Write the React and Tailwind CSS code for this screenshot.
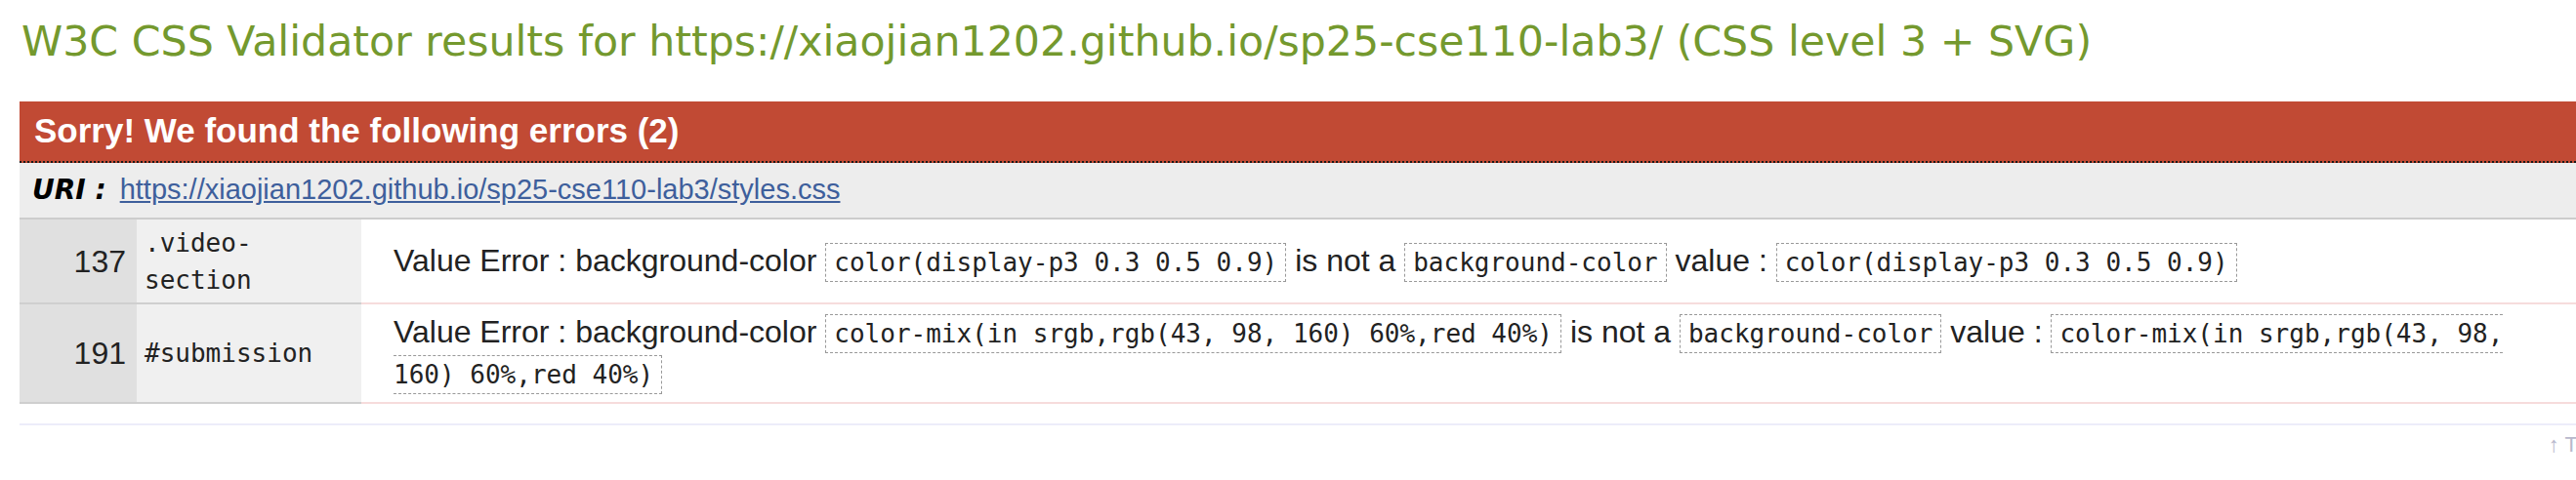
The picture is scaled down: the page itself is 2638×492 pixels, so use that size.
export default function App() {
  const code =
    "font-['DejaVu_Sans_Mono',monospace] text-[26px] border border-dashed border-[#999999] px-[8px] py-[4px] text-[#222222]";
  return (
    <div className="w-[2638px] h-[492px] overflow-hidden bg-white font-['Liberation_Sans',Arial,sans-serif]">
      <div className="ml-[20px] w-[2642px]">
        <h2 className="pt-[17px] pl-[2px] text-[42.7px] leading-[50px] font-normal text-[#74992e] font-['DejaVu_Sans',Verdana,sans-serif] whitespace-nowrap">
          W3C CSS Validator results for https://xiaojian1202.github.io/sp25-cse110-lab3/ (CSS level 3 + SVG)
        </h2>
        <div className="mt-[37px] h-[63px] bg-[#c14a34] border-b-2 border-dotted border-[#1a1a1a] flex items-center pl-[15px] text-white font-bold text-[35px] whitespace-nowrap">
          Sorry! We found the following errors (2)
        </div>
        <div className="h-[58px] bg-[#ededed] border-b-2 border-[#cccccc] flex items-center pl-[13px] text-[29px] whitespace-nowrap">
          <span className="font-['DejaVu_Sans',Verdana,sans-serif] font-bold italic text-[28px] text-black mr-[14px]">
            URI :
          </span>
          <a className="underline text-[#3e5f9c]">
            https://xiaojian1202.github.io/sp25-cse110-lab3/styles.css
          </a>
        </div>

        <div className="grid grid-cols-[120px_230px_1fr] h-[87px]">
          <div className="bg-[#e0e0e0] border-b-2 border-[#cfcfcf] flex items-center justify-end pr-[11px] text-[32px] text-[#222222]">
            137
          </div>
          <div className="bg-[#f0f0f0] border-b-2 border-[#cfcfcf] flex items-center pl-[8px] font-['DejaVu_Sans_Mono',monospace] text-[26px] leading-[38px] text-[#222222]">
            <div>
              .video-
              <br />
              section
            </div>
          </div>
          <div className="bg-white border-b-2 border-[#f6dcdc] flex items-center pl-[33px] text-[32px] leading-[40px] text-[#222222] whitespace-nowrap">
            <div>
              Value Error : background-color <span className={code}>color(display-p3 0.3 0.5 0.9)</span> is not a{" "}
              <span className={code}>background-color</span> value :{" "}
              <span className={code}>color(display-p3 0.3 0.5 0.9)</span>
            </div>
          </div>
        </div>

        <div className="grid grid-cols-[120px_230px_1fr] h-[102px]">
          <div className="bg-[#e0e0e0] border-b-2 border-[#cfcfcf] flex items-center justify-end pr-[11px] text-[32px] text-[#222222]">
            191
          </div>
          <div className="bg-[#f0f0f0] border-b-2 border-[#cfcfcf] flex items-center pl-[8px] font-['DejaVu_Sans_Mono',monospace] text-[26px] leading-[38px] text-[#222222]">
            <div>#submission</div>
          </div>
          <div className="bg-white border-b-2 border-[#f6dcdc] flex items-center pl-[33px] text-[32px] leading-[40px] text-[#222222] whitespace-nowrap">
            <div>
              Value Error : background-color{" "}
              <span className={code}>color-mix(in srgb,rgb(43, 98, 160) 60%,red 40%)</span> is not a{" "}
              <span className={code}>background-color</span> value :{" "}
              <span className={code}>
                color-mix(in srgb,rgb(43, 98,
                <br />
                160) 60%,red 40%)
              </span>
            </div>
          </div>
        </div>

        <div className="mt-[20px] h-[2px] bg-[#ececfa]" />
        <div className="mt-[8px] text-right text-[22px] leading-[24px] text-[#b8b8cc] whitespace-nowrap">
          ↑ Top
        </div>
      </div>
    </div>
  );
}
